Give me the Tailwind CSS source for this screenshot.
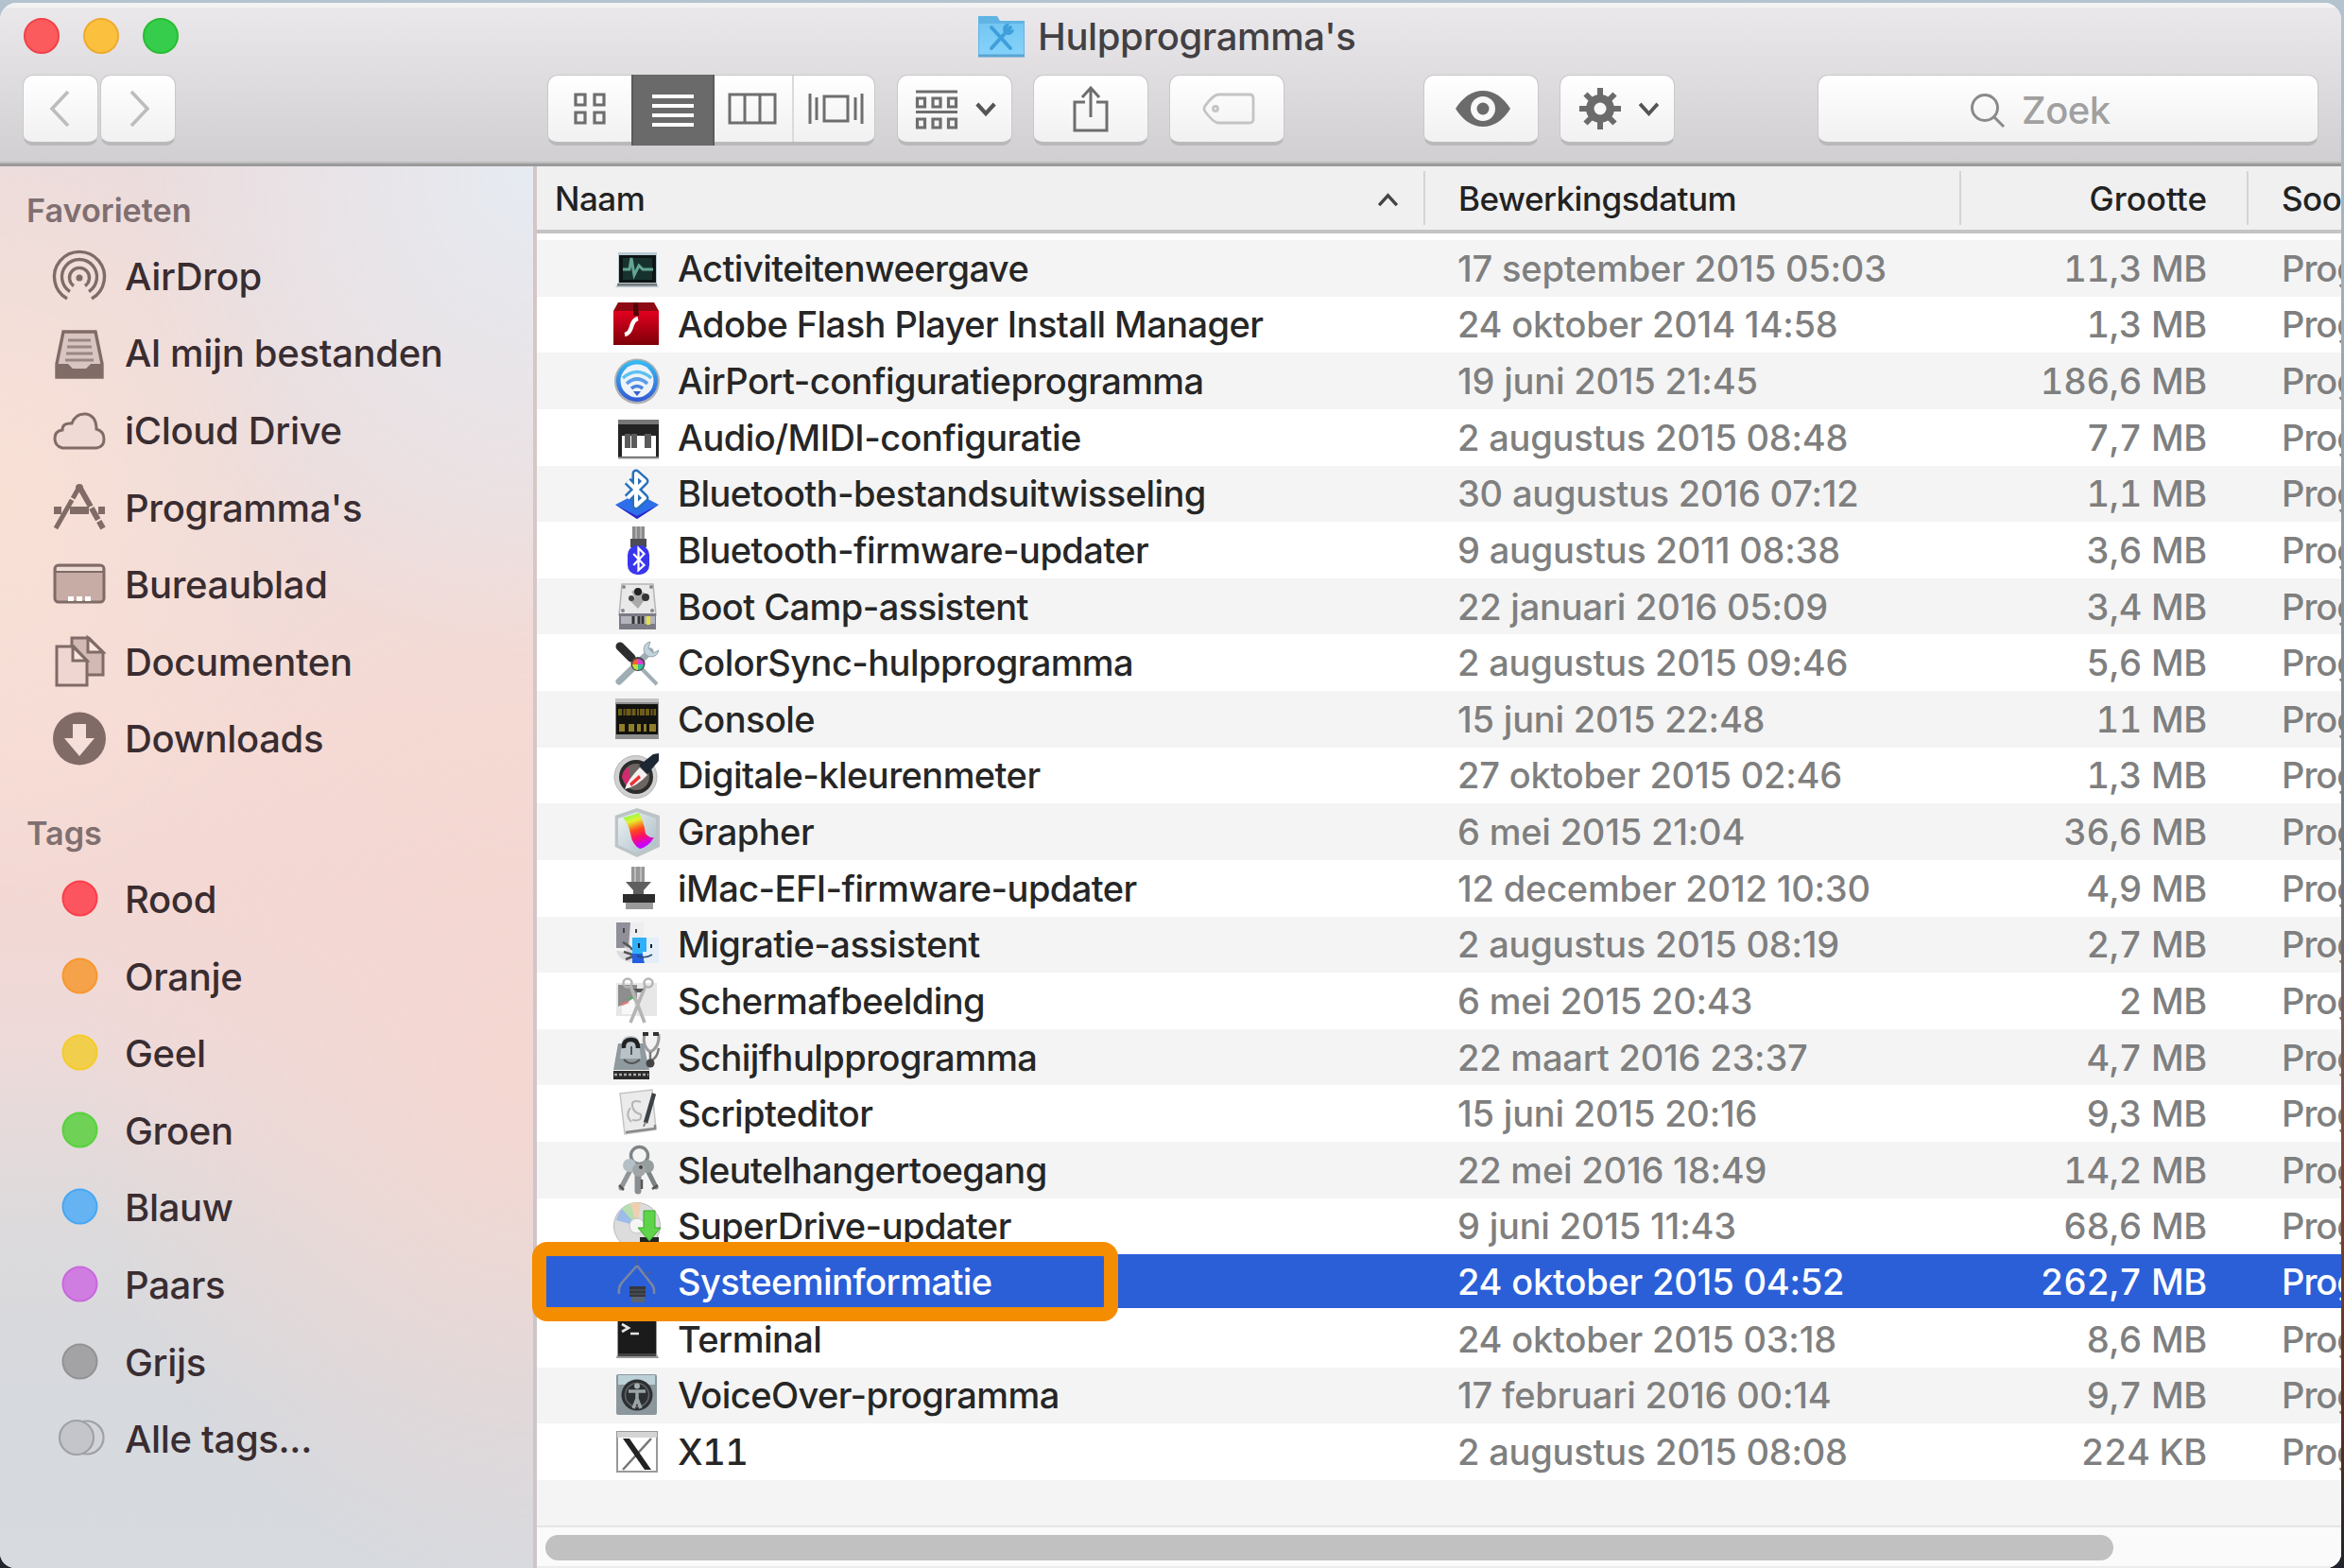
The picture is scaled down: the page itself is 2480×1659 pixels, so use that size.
<!DOCTYPE html>
<html lang="nl">
<head>
<meta charset="utf-8">
<title>Hulpprogramma's</title>
<script src="https://cdn.jsdelivr.net/npm/@tailwindcss/browser@4"></script>
</head>
<body class="w-[2480px] h-[1659px] overflow-hidden font-['Inter','Liberation_Sans',sans-serif] bg-[linear-gradient(180deg,#b3c3cf_0,#9db0c0_300px,#6d7886_900px,#7c4434_1250px,#5c2f26_1500px,#20242c_1659px)]">
<svg width="0" height="0" class="absolute">
  <defs>
    <linearGradient id="red" x1="0" y1="0" x2="0" y2="1"><stop offset="0" stop-color="#e3001f"/><stop offset="1" stop-color="#7d0008"/></linearGradient>
    <linearGradient id="sky" x1="0" y1="0" x2="0" y2="1"><stop offset="0" stop-color="#35bdf3"/><stop offset="1" stop-color="#3458d6"/></linearGradient>
    <linearGradient id="rainbow" x1="0" y1="0" x2=".3" y2="1"><stop offset="0" stop-color="#5dff6a"/><stop offset=".3" stop-color="#e6f02c"/><stop offset=".55" stop-color="#ff4a1c"/><stop offset=".75" stop-color="#ff1060"/><stop offset="1" stop-color="#c800ff"/></linearGradient>
    <linearGradient id="ice" x1="0" y1="0" x2="1" y2="1"><stop offset="0" stop-color="#eef4f6"/><stop offset="1" stop-color="#a9bcc4"/></linearGradient>
    <linearGradient id="folder" x1="0" y1="0" x2="0" y2="1"><stop offset="0" stop-color="#74c7f2"/><stop offset="1" stop-color="#84d2fb"/></linearGradient>
  </defs>
</svg>

<div class="mt-[3px] w-[2477px] h-[1656px] flex flex-col overflow-hidden rounded-t-[18px] rounded-b-[16px] bg-white">

  <!-- Title bar and toolbar -->
  <header class="h-[173px] shrink-0 border-t-[5px] border-[#f3f2f3] bg-[linear-gradient(180deg,#eae8eb,#d0ced1)] flex flex-col shadow-[inset_0_-3px_0_#9b9a9b,inset_0_-5px_0_#bdbbbd]">
    <div class="h-[59px] flex items-center">
      <div class="flex gap-[25px] pl-[25px]">
        <span class="size-[38px] rounded-full bg-[#fc5b5e] border-2 border-[#ee4249]"></span>
        <span class="size-[38px] rounded-full bg-[#fcc03f] border-2 border-[#eeab2c]"></span>
        <span class="size-[38px] rounded-full bg-[#35cd4b] border-2 border-[#27bd31]"></span>
      </div>
      <div class="flex items-center ml-[845px] pt-[2px]">
        <svg class="w-[51px] h-[48px] -mt-[2px]" viewBox="0 0 51 48"><path d="M1 3h20l3 5h26v37H1z" fill="#5fb4e4"/><path d="M2 11h47v33H2z" fill="url(#folder)"/><path d="M1 45h49" stroke="#58a5d2" stroke-width="3"/><path d="M15 15l20 22M35 15L15 37" stroke="#3f9fdc" stroke-width="4" stroke-linecap="round"/><path d="M34 11a6 6 0 1 0 5 6l-5 1-2-3z" fill="#3f9fdc"/></svg>
        <span class="ml-[13px] text-[40px] leading-none text-[#424043] font-[450] tracking-[-0.4px] whitespace-nowrap">Hulpprogramma's</span>
      </div>
    </div>
    <div class="flex h-[75px] mt-[12px] pl-[24px]">
      <div class="flex gap-[2px]">
        <div class="w-[80px] h-[75px] rounded-[11px] bg-linear-to-b from-white to-[#f1f1f1] border border-[#c9c8ca] border-b-4 border-b-[#b9b8ba] flex items-center justify-center"><svg class="w-[24px] h-[40px]" viewBox="0 0 24 40" fill="none" stroke="#bdbdbd" stroke-width="3.6"><path d="M20 2L3 20l17 18"/></svg></div>
        <div class="w-[80px] h-[75px] rounded-[11px] bg-linear-to-b from-white to-[#f1f1f1] border border-[#c9c8ca] border-b-4 border-b-[#b9b8ba] flex items-center justify-center"><svg class="w-[24px] h-[40px]" viewBox="0 0 24 40" fill="none" stroke="#bdbdbd" stroke-width="3.6"><path d="M5 2l17 18L5 38"/></svg></div>
      </div>
      <div class="ml-[393px] w-[347px] h-[75px] rounded-[11px] bg-linear-to-b from-white to-[#f1f1f1] border border-[#c9c8ca] border-b-4 border-b-[#b9b8ba] flex">
        <div class="w-[88px] flex items-center justify-center"><svg class="w-[34px] h-[34px]" viewBox="0 0 34 34" fill="none" stroke="#6e6e6e" stroke-width="3.2"><path d="M2 2h10v11H2zM22 2h10v11H22zM2 21h10v11H2zM22 21h10v11H22z"/></svg></div>
        <div class="w-[88px] h-[75px] -mt-px bg-[#6a6a6a] border-x-2 border-[#5a5a5a] flex items-center justify-center"><svg class="w-[46px] h-[36px]" viewBox="0 0 46 36" stroke="#fff" stroke-width="4"><path d="M1 3h44M1 13h44M1 23h44M1 33h44"/></svg></div>
        <div class="w-[84px] flex items-center justify-center border-r-2 border-[#dadada]"><svg class="w-[52px] h-[34px] ml-[-2px]" viewBox="0 0 52 34" fill="none" stroke="#6e6e6e" stroke-width="3"><path d="M2 2h48v30H2zM18 2v30M34 2v30"/></svg></div>
        <div class="flex-1 flex items-center justify-center"><svg class="w-[60px] h-[34px] ml-[4px]" viewBox="0 0 60 34" fill="none" stroke="#6e6e6e" stroke-width="3"><path d="M2 1v32M9 5v24M17 4h25v26H17zM50 5v24M57 1v32"/></svg></div>
      </div>
      <div class="ml-[23px] w-[122px] h-[75px] rounded-[11px] bg-linear-to-b from-white to-[#f1f1f1] border border-[#c9c8ca] border-b-4 border-b-[#b9b8ba] flex items-center pl-[18px] gap-[18px]">
        <svg class="w-[46px] h-[44px] mt-[4px]" viewBox="0 0 46 44" fill="none" stroke="#6e6e6e" stroke-width="3.2"><path d="M1 2h44M1 23.500h44M2.500 9h8v9h-8zM19 9h8v9h-8zM35.500 9h8v9h-8zM2.500 31h8v9h-8zM19 31h8v9h-8zM35.500 31h8v9h-8z"/></svg>
        <svg class="w-[22px] h-[15px]" viewBox="0 0 24 16" fill="none" stroke="#555" stroke-width="4.600"><path d="M2 2l10 11L22 2"/></svg>
      </div>
      <div class="ml-[22px] w-[122px] h-[75px] rounded-[11px] bg-linear-to-b from-white to-[#f1f1f1] border border-[#c9c8ca] border-b-4 border-b-[#b9b8ba] flex items-center justify-center"><svg class="w-[38px] h-[50px]" viewBox="0 0 38 50" fill="none" stroke="#6e6e6e" stroke-width="3"><path d="M13 18H2v30h34V18H25M19 34V3M10 13l9-10 9 10"/></svg></div>
      <div class="ml-[22px] w-[122px] h-[75px] rounded-[11px] bg-linear-to-b from-white to-[#f1f1f1] border border-[#c9c8ca] border-b-4 border-b-[#b9b8ba] flex items-center justify-center"><svg class="w-[56px] h-[34px] ml-[4px]" viewBox="0 0 56 34" fill="none" stroke="#c4c4c4" stroke-width="2.800"><path d="M17 2h33q4 0 4 4v22q0 4-4 4H17Q12 32 3 20q-2-3 0-6Q12 2 17 2z"/><circle cx="14" cy="17" r="2.500"/></svg></div>
      <div class="ml-[147px] w-[122px] h-[75px] rounded-[11px] bg-linear-to-b from-white to-[#f1f1f1] border border-[#c9c8ca] border-b-4 border-b-[#b9b8ba] flex items-center justify-center"><svg class="w-[60px] h-[40px] ml-[3px]" viewBox="0 0 60 40"><path d="M1 20Q13 1 30 1t29 19Q47 39 30 39T1 20z" fill="#6b6b6b"/><circle cx="30" cy="20" r="13" fill="#f8f8f8"/><circle cx="30" cy="20" r="6.500" fill="#6b6b6b"/></svg></div>
      <div class="ml-[22px] w-[122px] h-[75px] rounded-[11px] bg-linear-to-b from-white to-[#f1f1f1] border border-[#c9c8ca] border-b-4 border-b-[#b9b8ba] flex items-center pl-[19px] gap-[17px]">
        <svg class="size-[46px]" viewBox="-23 -23 46 46"><g stroke="#6b6b6b" stroke-width="6"><path d="M0-22V22M-22 0H22M-15.500-15.500l31 31M-15.500 15.500l31-31"/></g><circle r="15" fill="#6b6b6b"/><circle r="6.500" fill="#f8f8f8"/></svg>
        <svg class="w-[23px] h-[15px]" viewBox="0 0 24 16" fill="none" stroke="#555" stroke-width="4"><path d="M2 2l10 11L22 2"/></svg>
      </div>
      <div class="ml-[151px] w-[530px] h-[75px] rounded-[11px] bg-linear-to-b from-white to-[#f1f1f1] border border-[#c9c8ca] border-b-4 border-b-[#b9b8ba] flex items-center pl-[160px]">
        <svg class="w-[38px] h-[38px] mt-[4px]" viewBox="0 0 38 38" fill="none" stroke="#8a8a8a" stroke-width="3"><circle cx="16" cy="16" r="13.500"/><path d="M26 26l10 10"/></svg>
        <span class="ml-[17px] mt-[4px] text-[40px] leading-none text-[#a0a0a0] font-[450] tracking-[-0.5px]">Zoek</span>
      </div>
    </div>
  </header>

  <div class="flex flex-1 min-h-0">
    <!-- Sidebar -->
    <aside class="w-[568px] shrink-0 border-r-4 border-[#c8bcc0]/70 bg-clip-border bg-[radial-gradient(ellipse_420px_520px_at_100%_0,#e6ebf2_0,#e6ebf200_100%),radial-gradient(ellipse_330px_420px_at_0_24%,#f9e0d5_0,#f9e0d500_100%),radial-gradient(ellipse_480px_560px_at_100%_64%,#f5d7d1_0,#f5d7d100_100%),linear-gradient(180deg,#ebdcdd_0,#eddcdb_22%,#f5dbd5_40%,#f3d8d4_52%,#eedad9_62%,#dcdadc_76%,#d6d9de_88%,#d7dadf_100%)]">
      <div class="h-[76px] pt-[27px] pl-[28px] text-[34.2px] leading-[40px] font-semibold text-[#806f70]">Favorieten</div>
      <ul id="places"></ul>
      <div class="h-[88px] pt-[39px] pl-[28px] text-[34.2px] leading-[40px] font-semibold text-[#806f70]">Tags</div>
      <ul id="tags"></ul>
    </aside>

    <!-- File list -->
    <main class="flex-1 min-w-0 flex flex-col bg-white relative">
      <div class="h-[71px] shrink-0 bg-[#f0f0f0] border-b-4 border-[#c4c4c4] grid grid-cols-[940px_567px_304px_1fr] text-[35px] leading-[56px] tracking-[-0.5px] text-[#222] font-medium overflow-hidden">
        <div class="flex items-center justify-between pl-[19px] pr-[26px] border-r-2 border-[#d4d4d4] my-[5px]">Naam<svg class="w-[23px] h-[15px] mt-[3px]" viewBox="0 0 24 16" fill="none" stroke="#444" stroke-width="3.600"><path d="M2 14L12 3l10 11"/></svg></div>
        <div class="flex items-center pl-[35px] border-r-2 border-[#d4d4d4] my-[5px]">Bewerkingsdatum</div>
        <div class="flex items-center justify-end pr-[42px] border-r-2 border-[#d4d4d4] my-[5px] tracking-[0px]">Grootte</div>
        <div class="flex items-center pl-[35px] my-[5px] overflow-hidden">Soort</div>
      </div>
      <div id="rows" class="pt-[7px] flex-1 min-h-0 overflow-hidden"></div>
      <div class="h-[45px] shrink-0 bg-[#fafafa] border-t-2 border-[#e4e4e4] border-b-2 border-b-[#ececec] pt-[8px] pl-[9px]"><div class="w-[1659px] h-[27px] rounded-full bg-[#c1c1c1]"></div></div>
      <div class="absolute left-[-5px] top-[1138px] w-[620px] h-[84px] border-[15px] border-[#f58d00] rounded-[16px]"></div>
    </main>
  </div>
</div>

<script>
const places = [
  ["AirDrop", '<g fill="none" stroke="#806b67" stroke-width="3.400"><path d="M15 51A26.500 26.500 0 1 1 41 51"/><path d="M18 43.500A18.500 18.500 0 1 1 38 43.500"/><path d="M22 37.500A10.500 10.500 0 1 1 34 37.500"/></g><circle cx="28" cy="29" r="3.500" fill="#806b67"/>'],
  ["Al mijn bestanden", '<path d="M11 5h34l7 34v14H4V39z" fill="#d8c4c0" stroke="#806b67" stroke-width="3.400"/><path d="M16 14h24M15 21h26M14 28h28M13 35h30" stroke="#9a8682" stroke-width="3"/><path d="M4 39h12l5 5h14l5-5h12v15H4z" fill="#806b67"/>'],
  ["iCloud Drive", '<path d="M10 46q-8-2-8-10 0-8 8-9 0-8 10-7Q24 9 35 10q11 2 11 16 8 2 8 11 0 8-8 9z" fill="#efdad5" stroke="#806b67" stroke-width="3"/>'],
  ["Programma's", '<g fill="none" stroke="#806b67"><path d="M28 5L3 49" stroke-width="5" stroke-dasharray="14 2 40"/><path d="M28 5L53 49" stroke-width="6" stroke-dasharray="24 2 14 2 20"/><path d="M1 30h8M18 30h20M48 30h7" stroke-width="8"/></g><circle cx="28" cy="6" r="4" fill="#806b67"/>'],
  ["Bureaublad", '<rect x="2" y="7" width="52" height="39" rx="4" fill="#c7aca5" stroke="#806b67" stroke-width="3"/><path d="M4 9h48v4H4z" fill="#eedcd7"/><path d="M3 14h50" stroke="#806b67" stroke-width="2"/><path d="M16 40h6v5h-6zM25 40h6v5h-6zM34 40h6v5h-6z" fill="#fff"/>'],
  ["Documenten", '<g stroke="#806b67" stroke-width="3"><path d="M20 2h18l15 15v24H20z" fill="#d3b9b3"/><path d="M37 2v15h16z" fill="#fae6e1"/><path d="M4 11h18l14 15v26H4z" fill="#efd6d0"/><path d="M21 11v15h15z" fill="#fae6e1"/></g>'],
  ["Downloads", '<circle cx="28" cy="27.500" r="28" fill="#806b67"/><path d="M21 12h14v15h9L28 46 12 27h9z" fill="#f7dfd9"/>']
];
const tags = [["Rood","#fd5560","#fc3d49"],["Oranje","#f5a24b","#f89830"],["Geel","#f1cf4c","#f5cb2a"],["Groen","#6fd155","#57d33d"],["Blauw","#65b3f2","#47a7f3"],["Paars","#cf7de0","#c968dd"],["Grijs","#a3a3a5","#929294"]];
const side = (icon, name) => `<li class="h-[81.6px] flex items-center pl-[56px]"><svg class="size-[56px] overflow-visible shrink-0" viewBox="0 0 56 56">${icon}</svg><span class="ml-[20px] text-[40px] leading-none text-[#392d31] font-[450] tracking-[-0.33px] whitespace-nowrap">${name}</span></li>`;
document.getElementById("places").innerHTML = places.map(([n, i]) => side(i, n)).join("");
document.getElementById("tags").innerHTML = tags.map(([n, f, s]) => side(`<circle cx="28.500" cy="26.500" r="18" fill="${f}" stroke="${s}" stroke-width="2"/>`, n)).join("")
  + side('<g fill="#c3c5ca" stroke="#9fa1a6" stroke-width="2.200"><circle cx="36" cy="26" r="17.500" fill="#d2d4d9"/><circle cx="25" cy="26" r="18"/></g>', "Alle tags...");

const bt = '<path d="M-7-8L8 8 0 15V-16L8-8-7 8" fill="none"/>';
const icons = {
  act: '<path d="M4 7h41v33l2 4H1l3-4z" fill="#b9cad2"/><path d="M5 10h39v29H5z" fill="#0d1414"/><path d="M9 13h31v23H9z" fill="#17322e"/><path d="M9 25h7l2-12 3 18 5-10 4 4h11" fill="none" stroke="#63a591" stroke-width="3"/><path d="M3 40h42v2.500H3z" fill="#777"/>',
  flash: '<path d="M4 1h38l5 9v36H-1V10z" fill="#8d0a14"/><path d="M-1 10h48v34q0 2-2 2H1q-2 0-2-2z" fill="url(#red)"/><path d="M20 1h5l1 14h-6z" fill="#520409"/><path d="M11 35q5-1 7-8 2-8 7-9" fill="none" stroke="#fff" stroke-width="4.500"/>',
  airport: '<circle cx="24" cy="24.500" r="24" fill="#aeb0b3"/><circle cx="24" cy="24" r="22" fill="url(#sky)"/><circle cx="24" cy="24" r="17.500" fill="#eef3f8"/><g fill="none" stroke-width="3.600"><path d="M9 21q15-13 30 0" stroke="#5bc2f2"/><path d="M13 27q11-10 22 0" stroke="#5b9fea"/><path d="M18 32q6-5 12 0" stroke="#4a83e0"/></g><path d="M20 35h8l-4 5z" fill="#355fd5"/>',
  midi: '<path d="M4 5h43v41H4z" fill="#232323"/><path d="M4 5h43v5H4z" fill="#777"/><path d="M8 22h36v22H8z" fill="#fff"/><path d="M11 20h6v15h-6zM18 20h6v15h-6zM32 20h7v15h-7z" fill="#5a5a5a"/><path d="M4 45.500h43" stroke="#999" stroke-width="2"/>',
  btx: '<path d="M24 24L47 36 24 51 1 36z" fill="#2d6fea"/><path d="M1 36l23 12 23-12-23 15z" fill="#3023c8"/><g transform="translate(23 20)" stroke-linejoin="round"><g stroke="#2870bd" stroke-width="9"><path d="M-9-9L9 9 0 17V-17L9-9-9 9" fill="none"/></g><g stroke="#fff" stroke-width="4"><path d="M-9-9L9 9 0 17V-17L9-9-9 9" fill="none"/></g></g>',
  btf: '<path d="M19-1h13v14H19z" fill="#8b8b8b"/><path d="M23-1v14M28-1v14" stroke="#bbb" stroke-width="1.500"/><path d="M17 12h17v9H17z" fill="#4c4c52"/><rect x="14" y="19" width="23" height="31" rx="10" fill="#3a36ee"/><g transform="translate(25.500 34) scale(.75)" stroke="#fff" stroke-width="3">'+bt+'</g>',
  boot: '<path d="M8 0h33l3 33H5z" fill="#e9e9ea" stroke="#b5b5b8" stroke-width="1.500"/><path d="M5 31h39v17H5z" fill="#7b7b85"/><path d="M7 34h36v8H7z" fill="#b4b4be"/><path d="M20 34v8M26 34v8M30 34v8" stroke="#333" stroke-width="3"/><path d="M34 34h4v9h-4z" fill="#e6e23c"/><path d="M18 8l7-4 6 5 6 3-6 6-6 8-8-8 5-4z" fill="#aaa"/><circle cx="25" cy="8" r="4" fill="#222"/><circle cx="18" cy="15" r="3" fill="#444"/><circle cx="33" cy="14" r="4" fill="#333"/><g fill="#888"><circle cx="10" cy="3" r="2"/><circle cx="39" cy="3" r="2"/><circle cx="9" cy="28" r="2"/><circle cx="40" cy="28" r="2"/></g>',
  color: '<path d="M5 44L38 12" stroke="#9fadb5" stroke-width="7" stroke-linecap="round"/><path d="M38 2a8 8 0 1 0 9 9l-6 3-5-5z" fill="#c3d3dc" stroke="#93a5ae" stroke-width="1"/><path d="M14 15L45 47" stroke="#a3aeb4" stroke-width="4"/><path d="M6 7l12 12" stroke="#2d2d30" stroke-width="9" stroke-linecap="round"/><circle cx="25" cy="25.500" r="7.500" fill="#444"/><path d="M25 26v-6a6 6 0 0 0-6 6z" fill="#f06030"/><path d="M25 26v-6a6 6 0 0 1 6 6z" fill="#d940d0"/><path d="M25 26v6a6 6 0 0 1-6-6z" fill="#c8e030"/><path d="M25 26v6a6 6 0 0 0 6-6z" fill="#30c0a0"/>',
  console: '<path d="M1 2h46v43H1z" fill="#8e8e8e"/><path d="M1 2h46v4H1z" fill="#c4c4c4"/><path d="M2 8h44v32H2z" fill="#12120e"/><path d="M4 16.500h40" stroke="#6e5d1a" stroke-width="7" stroke-dasharray="4 1.500 2 1 5 1"/><path d="M5 33h6M15 33h6M24 33h4M31 33h3M37 33h7" stroke="#8f7e28" stroke-width="8"/>',
  meter: '<circle cx="22.500" cy="26" r="22.500" fill="#d0d0d0" stroke="#b5b5b5"/><circle cx="23" cy="26" r="18" fill="#2c2c2c"/><circle cx="23" cy="26" r="14" fill="#6c6662"/><path d="M8 27q0-7 7-12l2 18-4 3z" fill="#d02a70"/><path d="M11 39q3-10 16-23l8 8Q24 36 11 39z" fill="#f4f0f0"/><path d="M16 33l10-9 2 3-10 9z" fill="#f03030"/><path d="M26 14L41 2l6-1v8L35 23z" fill="#1d2733"/>',
  grapher: '<path d="M24-1l24 8v33L24 51 .7 40V7z" fill="#bcc4c7"/><path d="M24 3l20 7v28L24 47 4 38V10z" fill="url(#ice)"/><path d="M9 9Q18 7 26 4q5 9 7 22 4 5 9 4-6 10-15 12-8-4-10-16Q15 15 9 9z" fill="url(#rainbow)"/>',
  efi: '<path d="M18 1h14v16H18z" fill="#969696"/><path d="M22 1v16M28 1v16" stroke="#c7c7c7" stroke-width="1.500"/><path d="M12 17h27l-8 9v5H20v-5z" fill="#5f5f5f"/><path d="M9 30h34v9H9z" fill="#2c2c2c"/><path d="M12 39h29v7H12z" fill="#9a9a9a"/>',
  mig: '<path d="M2 1h15v27H2z" fill="#8f9099"/><path d="M17 1h14v27H15z" fill="#eeeef1"/><path d="M10 7v5M23 8v4" stroke="#444" stroke-width="2"/><path d="M2 31q4 14 24 12l-8-14-8-3 4 6z" fill="#dcdce0"/><path d="M9 22q8 4 10 8M10 32l12 4-10 4" fill="none" stroke="#555" stroke-width="2.500"/><path d="M19 17h15v15h-4v12H19z" fill="#2fb0f8"/><path d="M19 34h11l2 10H19z" fill="#2360e0"/><path d="M34 17h13v27H32l-2-12h4z" fill="#e3eef8"/><path d="M26 23v5M39 24v4" stroke="#123" stroke-width="2"/><path d="M24 36q8 4 16-1" fill="none" stroke="#2a4a7a" stroke-width="1.500"/>',
  shot: '<path d="M2 5h43v35H2z" fill="#e7e7e7"/><path d="M4 7h20v15L4 30z" fill="#8e8e8e"/><path d="M8 30l12-9 3 17H8z" fill="#f8f8f8"/><path d="M15 22l6-2" stroke="#4fae5f" stroke-width="2"/><path d="M8 28l7-3" stroke="#e77" stroke-width="2"/><g fill="none"><circle cx="14" cy="5" r="4.500" stroke="#b5b5b5" stroke-width="2.500"/><circle cx="36" cy="5" r="4.500" stroke="#b5b5b5" stroke-width="2.500"/><path d="M17 8l15 39M33 8L17 47" stroke="#b4b4b4" stroke-width="3.500"/></g><path d="M20 11h11l-3 4h-4z" fill="#555"/>',
  disk: '<path d="M4 9h27l6 28H-1z" fill="#8f9a9f"/><path d="M8 7q2-6 9-6 8 0 9 6l2 18H6z" fill="#b9c3c7"/><path d="M10 14q-1-9 8-9 7 0 7 9" fill="none" stroke="#222" stroke-width="4.500"/><path d="M10 26q8 8 17 0M18 12v9" fill="none" stroke="#555" stroke-width="2"/><path d="M-1 38h38v9H-1z" fill="#2b2b2b"/><path d="M0 42h36" stroke="#aaa" stroke-width="2.500" stroke-dasharray="3 2"/><path d="M32-1q-3 13 6 19 10-5 9-19" fill="none" stroke="#9c9c9c" stroke-width="3"/><path d="M38 18v9q7-1 9-13" fill="none" stroke="#777" stroke-width="2.500"/><circle cx="38" cy="30" r="4.500" fill="#444"/><path d="M30-1h6M41-1h6" stroke="#333" stroke-width="4"/>',
  script: '<path d="M6 3l34-4 4 42-33 5z" fill="#ebebeb" stroke="#c4c4c4" stroke-width="1.500"/><path d="M12 44l31-4v-4" fill="none" stroke="#888" stroke-width="2.500"/><path d="M28 12q-10-3-9 4t9 9q2 8-9 6M17 18q-6 8 1 15" fill="none" stroke="#b5b5b5" stroke-width="2"/><path d="M42 3L33 34" stroke="#3d4247" stroke-width="4.500"/><path d="M33 33l-2 5" stroke="#888" stroke-width="2"/>',
  keys: '<circle cx="26.500" cy="8.500" r="9" fill="none" stroke="#808486" stroke-width="3.500"/><g stroke-linecap="round"><path d="M18 22L7 43" stroke="#8f9598" stroke-width="5"/><path d="M34 22l10 20" stroke="#7d8385" stroke-width="5"/><path d="M25 24v22" stroke="#8a8e90" stroke-width="7"/></g><circle cx="16" cy="19" r="7" fill="#b5c0c6"/><circle cx="35" cy="20" r="7" fill="#969d9f"/><circle cx="26" cy="24" r="7" fill="#a0a5a7"/><circle cx="28" cy="21" r="2" fill="#444"/><path d="M5 40l5 5M40 44l6-4M29 34v10" stroke="#555" stroke-width="2.500"/>',
  cd: '<circle cx="24" cy="24" r="24.500" fill="#dcdcdc" stroke="#bbb" stroke-width="1"/><path d="M24 24L2 18Q4 8 12 3z" fill="#9dbce8"/><path d="M24 24L8 6q5-5 12-6z" fill="#b5dfae"/><path d="M24 24L17 0q6-1 11 0z" fill="#f0cfb0"/><circle cx="24" cy="24" r="8" fill="#f5f5f5" stroke="#c4c4c4"/><path d="M27 36h20v14H27z" fill="#222"/><path d="M31 8h12v18h6L37 40 25 26h6z" fill="#5fd44a" stroke="#3ba52c" stroke-width="1"/>',
  sys: '<g fill="none" stroke="#7a86a0" stroke-width="2.600"><path d="M24 7L8 25q-4 5-3 12M24 7l14 18q5 5 4 12"/></g><path d="M24-1v8M32 16l7-2" stroke="#4860a0" stroke-width="2"/><path d="M16 29h17v11H16z" fill="#34383f"/><path d="M18 40h14v6H18z" fill="#5b6474"/><path d="M16 33h17M16 37h17" stroke="#5a5a58" stroke-width="1.200"/>',
  term: '<path d="M3 0h42v40l2 4H2l1-4z" fill="#999"/><path d="M4 0h40v39H4z" fill="#1b1b1b"/><path d="M8 8l7 4-7 4M17 18h9" fill="none" stroke="#e4e4e4" stroke-width="2.600"/><path d="M4 39h40v3H4z" fill="#444"/>',
  voice: '<rect x="2" y="2" width="43" height="43" rx="2" fill="#8b979c"/><path d="M4 3h39v10H4z" fill="#bcd0d8"/><circle cx="24" cy="24" r="16.500" fill="#2d3032"/><circle cx="24" cy="24" r="12.500" fill="none" stroke="#626668" stroke-width="1.500"/><g stroke="#9ba3a7" stroke-width="3.500" fill="none"><path d="M15 20h18M24 20v8l-4 10M24 28l4 10"/></g><circle cx="24" cy="14.500" r="3" fill="#a8b0b4"/>',
  x11: '<path d="M3 3h42v42H3z" fill="#fff" stroke="#999" stroke-width="2"/><path d="M3 3h42v6H3z" fill="#d4d4d4"/><path d="M39 10L9 43" stroke="#777" stroke-width="2.500"/><path d="M9 10h7l23 33h-7z" fill="#222"/>'
};
const files = [
  ["act","Activiteitenweergave","17 september 2015 05:03","11,3 MB"],
  ["flash","Adobe Flash Player Install Manager","24 oktober 2014 14:58","1,3 MB"],
  ["airport","AirPort-configuratieprogramma","19 juni 2015 21:45","186,6 MB"],
  ["midi","Audio/MIDI-configuratie","2 augustus 2015 08:48","7,7 MB"],
  ["btx","Bluetooth-bestandsuitwisseling","30 augustus 2016 07:12","1,1 MB"],
  ["btf","Bluetooth-firmware-updater","9 augustus 2011 08:38","3,6 MB"],
  ["boot","Boot Camp-assistent","22 januari 2016 05:09","3,4 MB"],
  ["color","ColorSync-hulpprogramma","2 augustus 2015 09:46","5,6 MB"],
  ["console","Console","15 juni 2015 22:48","11 MB"],
  ["meter","Digitale-kleurenmeter","27 oktober 2015 02:46","1,3 MB"],
  ["grapher","Grapher","6 mei 2015 21:04","36,6 MB"],
  ["efi","iMac-EFI-firmware-updater","12 december 2012 10:30","4,9 MB"],
  ["mig","Migratie-assistent","2 augustus 2015 08:19","2,7 MB"],
  ["shot","Schermafbeelding","6 mei 2015 20:43","2 MB"],
  ["disk","Schijfhulpprogramma","22 maart 2016 23:37","4,7 MB"],
  ["script","Scripteditor","15 juni 2015 20:16","9,3 MB"],
  ["keys","Sleutelhangertoegang","22 mei 2016 18:49","14,2 MB"],
  ["cd","SuperDrive-updater","9 juni 2015 11:43","68,6 MB"],
  ["sys","Systeeminformatie","24 oktober 2015 04:52","262,7 MB"],
  ["term","Terminal","24 oktober 2015 03:18","8,6 MB"],
  ["voice","VoiceOver-programma","17 februari 2016 00:14","9,7 MB"],
  ["x11","X11","2 augustus 2015 08:08","224 KB"]
];
document.getElementById("rows").innerHTML = files.map(([icon, name, date, size], i) => {
  const sel = icon === "sys";
  const bg = sel ? "bg-[#2b5fd8] text-white border-b-[3px] border-white" : i % 2 ? "bg-white text-[#7f7f7f]" : "bg-[#f4f4f4] text-[#7f7f7f]";
  const nameStyle = sel ? "text-white tracking-[-0.55px]" : icon === "x11" ? "text-[#262626] tabular-nums tracking-[-0.5px]" : "text-[#262626] tracking-[-0.55px]";
  return `<div class="h-[59.64px] grid grid-cols-[940px_567px_304px_1fr] items-center text-[38px] leading-[56px] font-[450] whitespace-nowrap overflow-hidden ${bg}">
    <div class="flex items-center pl-[82px]"><svg class="size-[48px] shrink-0 overflow-visible" viewBox="0 0 48 48">${icons[icon]}</svg><span class="ml-[19px] ${nameStyle}">${name}</span></div>
    <div class="pl-[34px] tracking-[-0.2px]">${date}</div>
    <div class="pr-[44px] text-right tabular-nums tracking-[-0.3px]">${size}</div>
    <div class="pl-[35px] overflow-hidden tracking-[-1px]">Programma</div>
  </div>`;
}).join("") + '<div class="h-[60px] bg-[#f4f4f4]"></div>';
</script>
</body>
</html>
